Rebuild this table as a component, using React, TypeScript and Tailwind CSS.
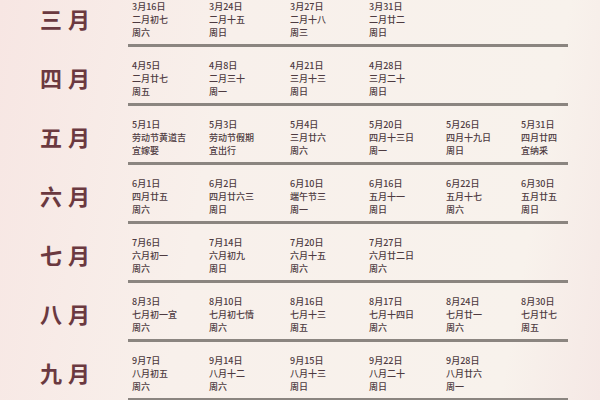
const rows: { month: string; cells: [string, string, string][] }[] = [
  {
    month: '三月',
    cells: [
      ['3月16日', '二月初七', '周六'],
      ['3月24日', '二月十五', '周日'],
      ['3月27日', '二月十八', '周三'],
      ['3月31日', '二月廿二', '周日'],
    ],
  },
  {
    month: '四月',
    cells: [
      ['4月5日', '二月廿七', '周五'],
      ['4月8日', '二月三十', '周一'],
      ['4月21日', '三月十三', '周日'],
      ['4月28日', '三月二十', '周日'],
    ],
  },
  {
    month: '五月',
    cells: [
      ['5月1日', '劳动节黄道吉', '宜嫁娶'],
      ['5月3日', '劳动节假期', '宜出行'],
      ['5月4日', '三月廿六', '周六'],
      ['5月20日', '四月十三日', '周一'],
      ['5月26日', '四月十九日', '周日'],
      ['5月31日', '四月廿四', '宜纳采'],
    ],
  },
  {
    month: '六月',
    cells: [
      ['6月1日', '四月廿五', '周六'],
      ['6月2日', '四月廿六三', '周日'],
      ['6月10日', '端午节三', '周一'],
      ['6月16日', '五月十一', '周日'],
      ['6月22日', '五月十七', '周六'],
      ['6月30日', '五月廿五', '周日'],
    ],
  },
  {
    month: '七月',
    cells: [
      ['7月6日', '六月初一', '周六'],
      ['7月14日', '六月初九', '周日'],
      ['7月20日', '六月十五', '周六'],
      ['7月27日', '六月廿二日', '周六'],
    ],
  },
  {
    month: '八月',
    cells: [
      ['8月3日', '七月初一宜', '周六'],
      ['8月10日', '七月初七情', '周六'],
      ['8月16日', '七月十三', '周五'],
      ['8月17日', '七月十四日', '周六'],
      ['8月24日', '七月廿一', '周六'],
      ['8月30日', '七月廿七', '周五'],
    ],
  },
  {
    month: '九月',
    cells: [
      ['9月7日', '八月初五', '周六'],
      ['9月14日', '八月十二', '周六'],
      ['9月15日', '八月十三', '周日'],
      ['9月22日', '八月二十', '周日'],
      ['9月28日', '八月廿六', '周一'],
    ],
  },
];

export default function App() {
  return (
    <div className="w-[600px] h-[400px] overflow-hidden bg-[linear-gradient(100deg,#f7e6e3_0%,#f8f0eb_35%,#f8f2ec_85%,#f5e8e5_100%)] font-['Noto_Sans_CJK_SC',sans-serif]">
      <div className="-mt-[12px] flex flex-col">
        {rows.map((row) => (
          <div key={row.month} className="flex h-[59px]">
            <div className="w-[128px] shrink-0 flex items-center pl-[40px]">
              <span className="text-[22px] leading-none font-bold tracking-[6px] text-[#6b3940]">
                {row.month}
              </span>
            </div>
            <div className="w-[440px] flex flex-col border-b-[3px] border-[#8b8580]">
              <div className="flex-1 grid grid-cols-[77px_81px_79px_77px_75px_auto] pt-[12px] pl-[4px]">
                {row.cells.map((c) => (
                  <div
                    key={c[0]}
                    className="flex flex-col text-[9px] leading-[13px] font-medium text-[#4e3b41] whitespace-nowrap"
                  >
                    <span>{c[0]}</span>
                    <span>{c[1]}</span>
                    <span>{c[2]}</span>
                  </div>
                ))}
              </div>
            </div>
          </div>
        ))}
      </div>
    </div>
  );
}
